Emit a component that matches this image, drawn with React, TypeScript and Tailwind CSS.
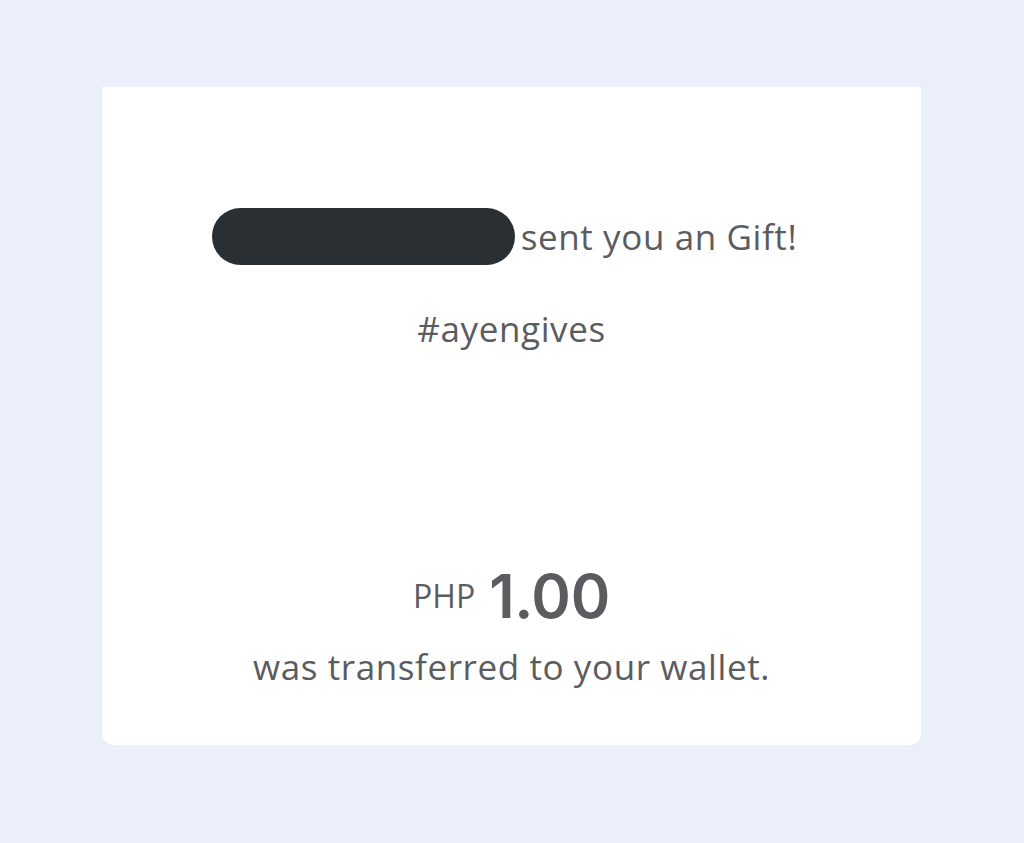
export default function App() {
  return (
    <div className="min-h-[843px] w-full bg-[#ebeff9] pt-[87px]" style={{ fontFamily: '"Open Sans", "Noto Sans", sans-serif' }}>
      <div className="ml-[102px] w-[819px] h-[658px] bg-white rounded-b-[12px] flex flex-col items-center text-[#5b5c60]">
        <div className="mt-[121px] mr-[14px] flex items-center">
          <div className="w-[303px] h-[57px] rounded-full bg-[#2a2f33]" />
          <span className="ml-[6px] text-[35px] leading-none tracking-[0.6px]">sent you an Gift!</span>
        </div>
        <div className="mt-[46px] text-[35px] leading-none tracking-[0.6px]">#ayengives</div>
        <div className="mt-[220px] flex items-center">
          <span className="text-[32px] leading-none">PHP</span>
          <span className="ml-[14px] text-[60px] leading-none font-semibold tracking-[-0.3px]" style={{ fontFamily: 'Inter, sans-serif' }}>1.00</span>
        </div>
        <div className="mt-[23px] text-[35px] leading-none tracking-[0.6px]">was transferred to your wallet.</div>
      </div>
    </div>
  );
}
